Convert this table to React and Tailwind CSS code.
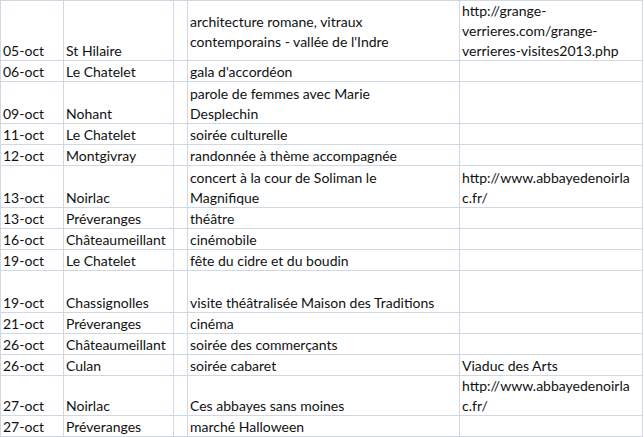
const rows = [
  { h: "h-[60px]", d: "05-oct", p: "St Hilaire", a: ["architecture romane, vitraux", "contemporains - vallée de l'Indre"], aCenter: true, u: ["http://grange-", "verrieres.com/grange-", "verrieres-visites2013.php"] },
  { h: "h-[21px]", d: "06-oct", p: "Le Chatelet", a: ["gala d'accordéon"] },
  { h: "h-[42px]", d: "09-oct", p: "Nohant", a: ["parole de femmes avec Marie", "Desplechin"] },
  { h: "h-[21px]", d: "11-oct", p: "Le Chatelet", a: ["soirée culturelle"] },
  { h: "h-[21px]", d: "12-oct", p: "Montgivray", a: ["randonnée à thème accompagnée"] },
  { h: "h-[42px]", d: "13-oct", p: "Noirlac", a: ["concert à la cour de Soliman le", "Magnifique"], u: ["http://www.abbayedenoirla", "c.fr/"] },
  { h: "h-[21px]", d: "13-oct", p: "Préveranges", a: ["théâtre"] },
  { h: "h-[21px]", d: "16-oct", p: "Châteaumeillant", a: ["cinémobile"] },
  { h: "h-[21px]", d: "19-oct", p: "Le Chatelet", a: ["fête du cidre et du boudin"] },
  { h: "h-[42px]", d: "19-oct", p: "Chassignolles", a: ["visite théâtralisée Maison des Traditions"] },
  { h: "h-[21px]", d: "21-oct", p: "Préveranges", a: ["cinéma"] },
  { h: "h-[21px]", d: "26-oct", p: "Châteaumeillant", a: ["soirée des commerçants"] },
  { h: "h-[21px]", d: "26-oct", p: "Culan", a: ["soirée cabaret"], u: ["Viaduc des Arts"] },
  { h: "h-[40px]", d: "27-oct", p: "Noirlac", a: ["Ces abbayes sans moines"], u: ["http://www.abbayedenoirla", "c.fr/"] },
  { h: "h-[21px]", d: "27-oct", p: "Préveranges", a: ["marché Halloween"] },
]

// une cellule du tableur, texte aligné en bas par défaut
function Cell({ w, lines, center }) {
  return (
    <div
      className={
        "flex flex-col shrink-0 border-b border-r border-[#d0d7e5] pl-[2px] whitespace-nowrap leading-[20px] " +
        (center ? "justify-center " : "justify-end ") +
        w
      }
    >
      {(lines || []).map((t, i) => (
        <div key={i} className="translate-y-px">{t}</div>
      ))}
    </div>
  )
}

export default function App() {
  return (
    <div className="w-[644px] h-[437px] bg-white overflow-hidden text-[14px] text-[#111] font-[Lato,sans-serif]">
      <div className="w-[643px] border-t border-l border-[#d0d7e5]">
        {rows.map((r, i) => (
          <div key={i} className={"flex " + r.h}>
            <Cell w="w-[63px]" lines={[r.d]} />
            <Cell w="w-[110px]" lines={[r.p]} />
            <Cell w="w-[14px]" />
            <Cell w="w-[272px]" lines={r.a} center={r.aCenter} />
            <Cell w="w-[183px]" lines={r.u} />
          </div>
        ))}
      </div>
    </div>
  )
}
